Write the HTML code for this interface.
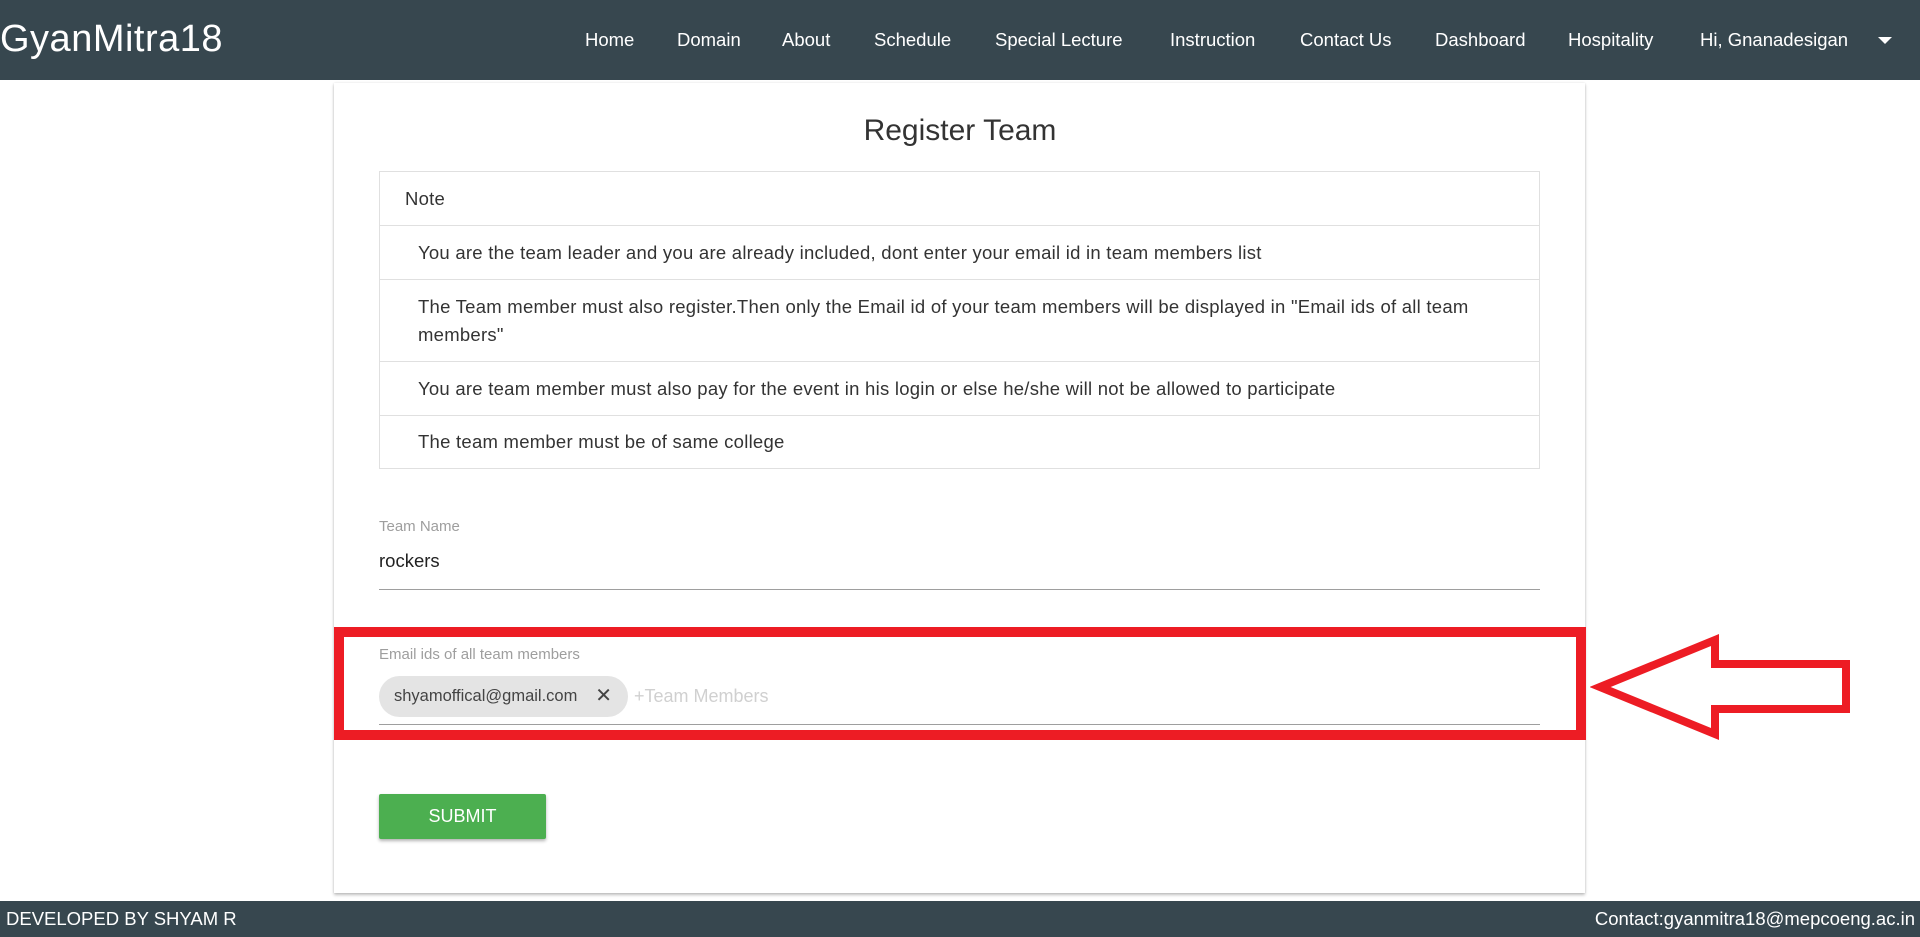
<!DOCTYPE html>
<html><head><meta charset="utf-8"><style>
*{box-sizing:border-box;margin:0;padding:0}
body{width:1920px;height:937px;background:#fff;font-family:"Liberation Sans",sans-serif;position:relative;overflow:hidden;color:#222}
.nav{position:absolute;left:0;top:0;width:1920px;height:80px;background:#37474f;color:#fff}
.logo{position:absolute;left:0;top:18px;font-size:38px;letter-spacing:0.5px}
.nav a{position:absolute;top:29px;font-size:18.5px;color:#fff;text-decoration:none}
.caret{position:absolute;left:1878px;top:37px;width:0;height:0;border-left:7px solid transparent;border-right:7px solid transparent;border-top:7px solid #fff}
.card{position:absolute;left:334px;top:83px;width:1251px;height:810px;background:#fff;box-shadow:0 2px 3px rgba(0,0,0,.25),0 0 2px rgba(0,0,0,.1)}
.abs{position:absolute}
h1{position:absolute;left:0;width:1920px;top:114px;text-align:center;font-weight:normal;font-size:30px;color:#333}
.note{position:absolute;left:379px;top:171px;width:1161px;border:1px solid #e0e0e0}
.row{border-top:1px solid #e0e0e0;padding:0 25px 0 38px;font-size:18.5px;color:#333;display:flex;align-items:center;line-height:28px;letter-spacing:.25px}
.row:first-child{border-top:none;padding-left:25px}
.lbl{font-size:15px;color:#9e9e9e}
.line{position:absolute;left:379px;width:1161px;height:1px;background:#9e9e9e}
</style></head><body>
<div class="nav">
<div class="logo">GyanMitra18</div>
<a style="left:585px">Home</a><a style="left:677px">Domain</a><a style="left:782px">About</a><a style="left:874px">Schedule</a><a style="left:995px">Special Lecture</a><a style="left:1170px">Instruction</a><a style="left:1300px">Contact Us</a><a style="left:1435px">Dashboard</a><a style="left:1568px">Hospitality</a><a style="left:1700px">Hi, Gnanadesigan</a>
<div class="caret"></div>
</div>
<div class="card"></div>
<h1>Register Team</h1>
<div class="note">
<div class="row" style="height:53px">Note</div>
<div class="row" style="height:54px">You are the team leader and you are already included, dont enter your email id in team members list</div>
<div class="row" style="height:82px">The Team member must also register.Then only the Email id of your team members will be displayed in "Email ids of all team members"</div>
<div class="row" style="height:54px">You are team member must also pay for the event in his login or else he/she will not be allowed to participate</div>
<div class="row" style="height:53px">The team member must be of same college</div>
</div>
<div class="abs lbl" style="left:379px;top:518px">Team Name</div>
<div class="abs" style="left:379px;top:550px;font-size:18.5px;color:#222">rockers</div>
<div class="line" style="top:589px"></div>
<div class="abs" style="left:334px;top:627px;width:1252px;height:113px;border:10px solid #ed1c24"></div>
<div class="abs lbl" style="left:379px;top:646px">Email ids of all team members</div>
<div class="abs" style="left:379px;top:676px;width:249px;height:41px;border-radius:21px;background:#e4e4e4;font-size:16.5px;color:#444;line-height:41px;padding-left:15px">shyamoffical@gmail.com<span style="position:absolute;right:16px;font-size:20px">✕</span></div>
<div class="abs" style="left:634px;top:686px;font-size:18px;color:#d0d0d0">+Team Members</div>
<div class="line" style="top:724px"></div>
<svg class="abs" style="left:1590px;top:630px" width="270" height="115" viewBox="1590 630 270 115"><polygon points="1600,687 1715,640 1715,664 1846,664 1846,709 1715,709 1715,734" fill="none" stroke="#ed1c24" stroke-width="8"/></svg>
<div class="abs" style="left:379px;top:794px;width:167px;height:45px;background:#4caf50;color:#fff;font-size:18px;text-align:center;line-height:45px;border-radius:2px;box-shadow:0 2px 3px rgba(0,0,0,.3)">SUBMIT</div>
<div class="abs" style="left:0;top:901px;width:1920px;height:36px;background:#37474f;color:#fff;font-size:18.5px;line-height:36px">
<span style="position:absolute;left:6px">DEVELOPED BY SHYAM R</span>
<span style="position:absolute;right:5px">Contact:gyanmitra18@mepcoeng.ac.in</span></div>
</body></html>
